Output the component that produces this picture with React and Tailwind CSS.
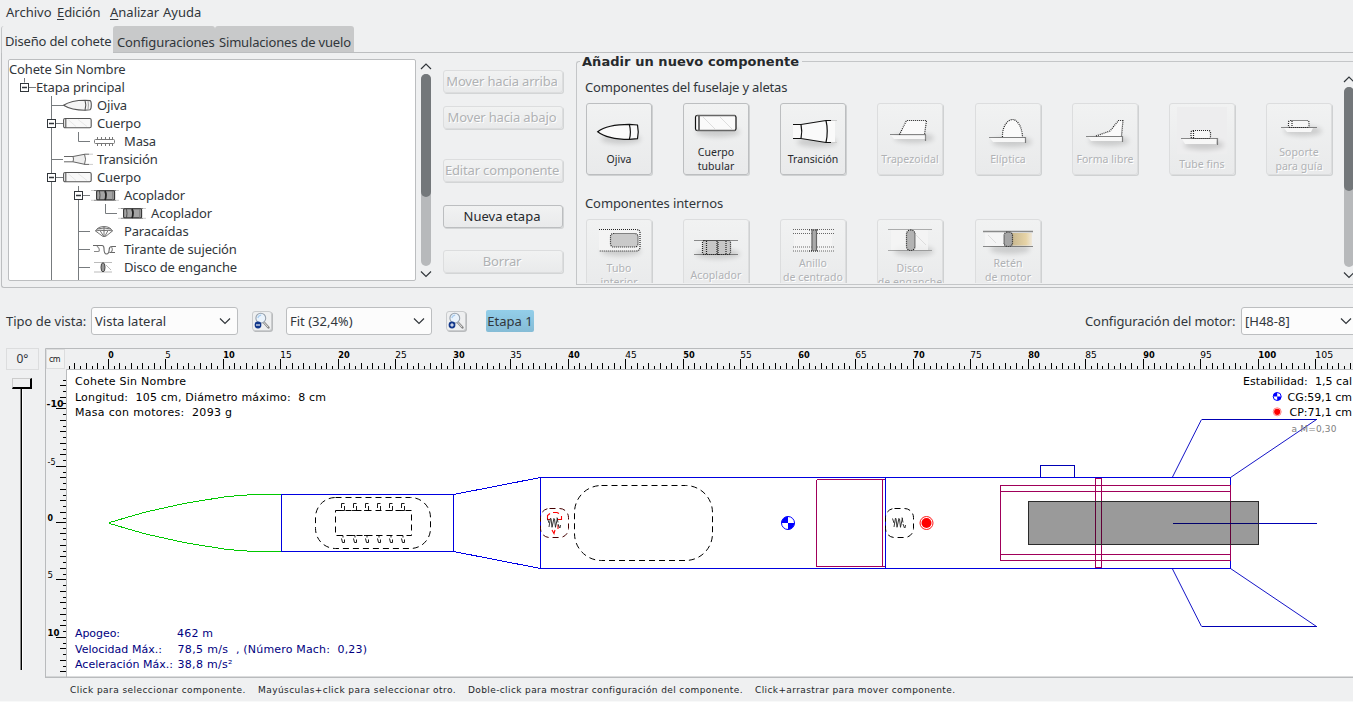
import React from "react";

/* ---------- small shared pieces ---------- */

function Chevron({ up, className = "" }) {
  return (
    <svg width="12" height="8" viewBox="0 0 12 8" className={"shrink-0 " + className} fill="none" stroke="#31363b" strokeWidth="1.2">
      <path d={up ? "M1 6 L6 1 L11 6" : "M1 1.5 L6 6.5 L11 1.5"} />
    </svg>
  );
}

function PushButton({ children, enabled, className = "" }) {
  return (
    <div
      className={
        "flex h-[23px] w-[120px] shrink-0 items-center justify-center whitespace-nowrap rounded-[3px] border bg-linear-to-b from-[#f1f2f2] to-[#e9eaeb] pr-[2px] pb-[2px] text-[13px] tracking-[-0.16px] shadow-[1px_1px_0_#d3d5d6] " +
        (enabled ? "border-[#bcbec0] text-[#26292c] tracking-normal " : "border-[#dcddde] text-[#b0b2b4] [text-shadow:1px_1px_0_#fff] ") +
        className
      }
    >
      {children}
    </div>
  );
}

/* ---------- design tree ---------- */

function NoseIcon() {
  return (
    <g fill="#f4f4f4" stroke="#555" strokeWidth="1.1">
      <path d="M0.5 9.3 C7 5 13 4.2 22 4.2 L27 4.6 Q28.3 5 28.3 9 T27 13.8 L22 14.3 C13 14.3 7 13.3 0.5 9.3Z" />
      <path d="M22 4.2 Q23.6 9 22 14.3" fill="none" />
      <path d="M25 5 Q26 9 25 13.6" fill="none" stroke="#aaa" />
    </g>
  );
}
function TubeIcon() {
  return (
    <g fill="#f8f8f8" stroke="#555" strokeWidth="1.1">
      <rect x="0.6" y="4.5" width="27.6" height="9.2" rx="1.5" />
      <path d="M2.8 4.5 V13.7" fill="none" />
      <path d="M5 5.5 L13 12.5 M15 5.5 L24 12.5" stroke="#e2e2e2" strokeWidth="0.8" />
    </g>
  );
}
function TransitionIcon() {
  return (
    <g fill="#f0f0f0" stroke="#666" strokeWidth="1">
      <path d="M10 6.5 L21.5 4.2 V14.4 L10 11.8Z" stroke="none" fill="#eee" />
      <path d="M1 6.5 H10 L22 4.2 H26 M1 11.8 H10 L22 14.4 H26" fill="none" />
      <path d="M26 4.2H30M26 14.4H30" stroke="#ccc" />
      <path d="M10 6.5 Q11 9 10 11.8 M21.5 4.2 Q23.5 9 21.5 14.4" fill="none" />
    </g>
  );
}
function MassIcon() {
  return (
    <g stroke="#777" fill="none">
      <rect x="0.5" y="7.5" width="20" height="4" rx="1" fill="#fff" />
      <path d="M3.5 5V7M7.5 5V7M11.5 5V7M15.5 5V7M18.5 5V7M3.5 12V14M7.5 12V14M11.5 12V14M15.5 12V14M18.5 12V14" />
    </g>
  );
}
function CouplerIcon() {
  return (
    <g>
      <path d="M3 4.5 H25 M3 14.3 H25" stroke="#888" strokeWidth="1" />
      <path d="M0 4.5 H3 M25 4.5H28 M0 14.3 H3 M25 14.3H28" stroke="#ccc" strokeWidth="1" />
      <rect x="5.6" y="4.8" width="18" height="9" rx="1" fill="#a4a4a4" stroke="#333" strokeWidth="1.1" />
      <path d="M8.5 5 Q9.5 9 8.5 14" stroke="#444" strokeWidth="0.9" fill="none" />
      <path d="M14 5 Q16 9 14 14" stroke="#222" strokeWidth="1.8" fill="none" />
      <path d="M21.8 5V14" stroke="#777" strokeWidth="0.9" />
    </g>
  );
}
function ChuteIcon() {
  return (
    <g fill="#eee" stroke="#666" strokeWidth="0.9">
      <path d="M0.5 9 Q3 4.5 9 4.5 Q15 4.5 17.5 9 Q13 7.8 9 8.6 Q5 7.8 0.5 9Z" />
      <path d="M0.5 9 L8 14.5 H10.5 L17.5 9 M5 8.5 L8.5 14 M13 8.5 L10 14 M9 5 V14 M2 7 Q9 5 16 7" fill="none" />
    </g>
  );
}
function CordIcon() {
  return (
    <g fill="none" stroke="#666" strokeWidth="1.1">
      <path d="M1 5.5H10Q12 5.5 12 8.5Q12 14 14.5 14Q17 14 17.2 9.5Q17.2 6.5 20 6.5H24M17.5 12.5H23" />
      <path d="M2 11.5H6Q8 11.5 7 8.5L5 6M19 12Q21.5 10 19.5 7" stroke="#888" />
    </g>
  );
}
function DiscIcon() {
  return (
    <g fill="none" stroke="#aaa">
      <path d="M0 4.5 H18 M0 14 H18 M12 7 L17 12" strokeWidth="0.8" />
      <ellipse cx="9" cy="9.3" rx="2" ry="4.6" fill="#999" stroke="#444" />
    </g>
  );
}

const LINE = "#777b7e";
const TREE = [
  { label: "Cohete Sin Nombre", x: 0, lines: "" },
  { label: "Etapa principal", x: 27, lines: "M15.5 0V4.5 M20 9.5H27", box: 15.5 },
  { label: "Ojiva", x: 88, lines: "M42.5 0V18 M42.5 9.5H54", Icon: NoseIcon, ix: 54 },
  { label: "Cuerpo", x: 88, lines: "M42.5 0V18 M47 9.5H54", box: 42.5, Icon: TubeIcon, ix: 54 },
  { label: "Masa", x: 115, lines: "M42.5 0V18 M69.5 0V9.5H81", Icon: MassIcon, ix: 85 },
  { label: "Transición", x: 88, lines: "M42.5 0V18 M42.5 9.5H54", Icon: TransitionIcon, ix: 54 },
  { label: "Cuerpo", x: 88, lines: "M42.5 0V18 M47 9.5H54", box: 42.5, Icon: TubeIcon, ix: 54 },
  { label: "Acoplador", x: 115, lines: "M42.5 0V18 M69.5 0V18 M74 9.5H81", box: 69.5, Icon: CouplerIcon, ix: 82 },
  { label: "Acoplador", x: 142, lines: "M42.5 0V18 M69.5 0V18 M96.5 0V9.5H108", Icon: CouplerIcon, ix: 109 },
  { label: "Paracaídas", x: 115, lines: "M42.5 0V18 M69.5 0V18 M69.5 9.5H81", Icon: ChuteIcon, ix: 86 },
  { label: "Tirante de sujeción", x: 115, lines: "M42.5 0V18 M69.5 0V18 M69.5 9.5H81", Icon: CordIcon, ix: 83 },
  { label: "Disco de enganche", x: 115, lines: "M42.5 0V22 M69.5 0V22 M69.5 9.5H81", Icon: DiscIcon, ix: 85 },
];

function DesignTree() {
  return (
    <div className="flex h-[222px] w-[408px] shrink-0 flex-col overflow-hidden rounded-[2px] border border-[#bcbec0] bg-white">
      {TREE.map(({ label, x, lines, box, Icon, ix }, i) => (
        <div key={i} className="flex h-[18px] shrink-0 items-center">
          <svg width={x} height="18" className="shrink-0 overflow-visible">
            <path d={lines} fill="none" stroke={LINE} />
            {box && (
              <g>
                <rect x={box - 4} y="5.5" width="8" height="8" fill="#fff" stroke="#31363b" />
                <path d={`M${box - 2.5} 9.5h5`} stroke="#31363b" strokeWidth="1.4" />
              </g>
            )}
            {Icon && (
              <g transform={`translate(${ix} 0)`}>
                <Icon />
              </g>
            )}
          </svg>
          <span className="whitespace-nowrap text-[13px] leading-[18px] tracking-[-0.15px]">{label}</span>
        </div>
      ))}
    </div>
  );
}

/* ---------- component palette ---------- */

const INK = "#111";
const DOT = { fill: "none", stroke: "#222", strokeWidth: 1.2, strokeDasharray: "1 1" };

const Shadow = ({ x, y, w }) => (
  <ellipse cx={x} cy={y} rx={w} ry="5" fill="#000" opacity="0.14" filter="url(#soft)" />
);

const ICONS = {
  ojiva: (
    <g>
      <Shadow x={34} y={35} w={20} />
      <path d="M10.7 27.7 C18 22 30 20.3 42.3 20.3 L50.5 21 Q52 28 50.5 34.7 L42.3 35.4 C30 35.3 18 33.5 10.7 27.7Z" fill="#fafafa" stroke={INK} strokeWidth="1.2" />
      <path d="M42.3 20.3 Q44.5 28 42.3 35.4" fill="none" stroke={INK} strokeWidth="1.2" />
    </g>
  ),
  cuerpo: (
    <g>
      <Shadow x={34} y={28} w={22} />
      <rect x="11.5" y="11.5" width="40.5" height="15" rx="1.8" fill="#fafafa" stroke={INK} strokeWidth="1.2" />
      <path d="M15 12 V26.5" stroke={INK} strokeWidth="1.2" />
      <path d="M19 13 L31 25 M36 13 L48 25" stroke="#ddd" />
      <path d="M13 11.5H51M13 26.5H51" stroke="#666" strokeWidth="1.6" />
    </g>
  ),
  transicion: (
    <g>
      <Shadow x={36} y={38} w={20} />
      <path d="M12 20.5 H20 L45 16.5 H54 V38.5 H45 L20 34.5 H12Z" fill="#fafafa" />
      <path d="M12 20.5 H20 L45 16.5 H50 M12 34.5 H20 L45 38.5 H50 M20 20.5 Q21.5 27.5 20 34.5 M45 16.5 Q47.5 27 45 38.5" fill="none" stroke={INK} strokeWidth="1.2" />
      <path d="M50 16.5H56M50 38.5H56" stroke="#ccc" />
    </g>
  ),
  trapezoidal: (
    <g>
      <Shadow x={36} y={34} w={20} />
      <path d="M21.5 30.5 L27.7 16.5 H48.5 L46.5 30.5Z" fill="#fafafa" />
      <path d="M13 31.5H48V35H16Z" fill="#f7f7f7" />
      <path d="M12.5 30.5H47.5V37 M21.5 30.5 L28.5 16.5 H48.5 L46.5 30.5" {...DOT} />
    </g>
  ),
  eliptica: (
    <g>
      <Shadow x={36} y={38} w={20} />
      <path d="M26.5 33 C26 22 32 15.5 36.5 15.5 C41 15.5 46 22 46.5 33Z" fill="#fafafa" />
      <path d="M14 34H49V38H17Z" fill="#f7f7f7" />
      <path d="M13.5 33.5H49.5V39 M26.5 33 C26 22 32 15.5 36.5 15.5 C41 15.5 46 22 46.5 33" {...DOT} />
    </g>
  ),
  libre: (
    <g>
      <Shadow x={36} y={37} w={20} />
      <path d="M23 32 L37 27 L45.5 16.5 H50 L48.5 32Z" fill="#fafafa" />
      <path d="M15 33H49V37H18Z" fill="#f7f7f7" />
      <path d="M13.5 32.5H49.5V38 M23 32 L37 27 L45.5 16.5 H50 L48.5 32" {...DOT} />
    </g>
  ),
  tubefins: (
    <g>
      <rect x="7" y="3" width="50" height="47" fill="#ededee" />
      <Shadow x={34} y={41} w={20} />
      <path d="M12 35H46V40H15Z" fill="#f7f7f7" />
      <rect x="21" y="26.5" width="19.5" height="8" rx="2" {...DOT} fill="#f7f7f7" />
      <path d="M11.5 34.5H47.5V41 M23.5 27V34" {...DOT} />
    </g>
  ),
  soporte: (
    <g>
      <Shadow x={36} y={27} w={19} />
      <path d="M17 24H46L44 28H20Z" fill="#f7f7f7" />
      <rect x="21.5" y="16.5" width="20.5" height="7" rx="2" {...DOT} fill="#f7f7f7" />
      <path d="M14.5 23.5H49.5 M25 17V23" {...DOT} />
    </g>
  ),
  tubo: (
    <g>
      <Shadow x={34} y={31} w={20} />
      <path d="M12 9.5H49Q53 9.5 53 13V27Q53 31 49 31H12Z" fill="#f4f4f4" />
      <path d="M12 9.5H49Q53 9.5 53 13V27Q53 31 49 31H12" {...DOT} />
      <rect x="23.5" y="13.5" width="27.5" height="13.5" rx="3" fill="#c9c9c9" />
      <rect x="23.5" y="13.5" width="27.5" height="13.5" rx="3" {...DOT} />
    </g>
  ),
  acoplador: (
    <g>
      <Shadow x={34} y={34} w={22} />
      <rect x="18.5" y="20.5" width="28" height="14" rx="2" fill="#c6c6c6" />
      <rect x="18.5" y="20.5" width="28" height="14" rx="2" {...DOT} />
      <path d="M10.5 20.5H54M10.5 34.5H54M22.5 21V34M33 21V34M34 22V35M42 21V34" {...DOT} />
    </g>
  ),
  anillo: (
    <g>
      <rect x="13" y="9" width="38" height="22" fill="#f5f5f5" opacity="0.8" />
      <path d="M12 9.5H54M12 13.5H54M12 27H54M12 31H54" {...DOT} stroke="#666" />
      <rect x="30.5" y="9" width="5.5" height="22" rx="2" fill="#aaa" />
      <path d="M31 9.5V31M35.5 9.5V31M28 10H38M28 31H38" {...DOT} />
    </g>
  ),
  disco: (
    <g>
      <Shadow x={36} y={31} w={20} />
      <rect x="13" y="10" width="37" height="20" fill="#f5f5f5" opacity="0.8" />
      <path d="M10.5 9.5H53.5M10.5 30.5H53.5" {...DOT} stroke="#666" />
      <path d="M38 15L48 25" stroke="#ddd" />
      <rect x="28.5" y="10" width="8.5" height="20.5" rx="4" fill="#b3b3b3" />
      <rect x="28.5" y="10" width="8.5" height="20.5" rx="4" {...DOT} />
    </g>
  ),
  reten: (
    <g>
      <Shadow x={34} y={29} w={20} />
      <rect x="9" y="12" width="20" height="14" fill="#f5f5f5" />
      <rect x="36" y="13" width="20" height="12.5" fill="url(#amber)" />
      <path d="M7.5 11.5H56.5" {...DOT} strokeWidth="1.6" />
      <path d="M7.5 26.5H56.5" {...DOT} />
      <path d="M12 15L20 23" stroke="#ddd" />
      <rect x="28" y="12" width="8.5" height="14.5" rx="3.5" fill="#a5a5a5" />
      <rect x="28" y="12" width="8.5" height="14.5" rx="3.5" {...DOT} />
    </g>
  ),
};

function ComponentCard({ icon, iconHeight, lines, enabled }) {
  return (
    <div
      className={
        "flex h-[72px] w-[66px] flex-col items-center rounded-[3px] border bg-linear-to-b from-[#f1f2f2] to-[#e9eaeb] shadow-[1px_1px_0_#cfd1d2] " +
        (enabled ? "border-[#bcbec0] text-[#26292c]" : "border-[#dcddde] text-[#b0b2b5] [text-shadow:1px_1px_0_#fff]")
      }
    >
      <svg width="64" height={iconHeight} className="-mb-px shrink-0 overflow-visible">
        {ICONS[icon]}
      </svg>
      {lines.map((l) => (
        <span key={l} className="whitespace-nowrap text-[10.5px] leading-[14px] tracking-[0.06px]">
          {l}
        </span>
      ))}
    </div>
  );
}

const BODY = [
  { icon: "ojiva", iconHeight: 49, lines: ["Ojiva"], enabled: true },
  { icon: "cuerpo", iconHeight: 42, lines: ["Cuerpo", "tubular"], enabled: true },
  { icon: "transicion", iconHeight: 49, lines: ["Transición"], enabled: true },
  { icon: "trapezoidal", iconHeight: 49, lines: ["Trapezoidal"] },
  { icon: "eliptica", iconHeight: 49, lines: ["Elíptica"] },
  { icon: "libre", iconHeight: 49, lines: ["Forma libre"] },
  { icon: "tubefins", iconHeight: 54, lines: ["Tube fins"] },
  { icon: "soporte", iconHeight: 42, lines: ["Soporte", "para guía"] },
];
const INNER = [
  { icon: "tubo", iconHeight: 42, lines: ["Tubo", "interior"] },
  { icon: "acoplador", iconHeight: 49, lines: ["Acoplador"] },
  { icon: "anillo", iconHeight: 37, lines: ["Anillo", "de centrado"] },
  { icon: "disco", iconHeight: 42, lines: ["Disco", "de enganche"] },
  { icon: "reten", iconHeight: 37, lines: ["Retén", "de motor"] },
];

function CardRow({ items }) {
  return (
    <div className="grid grid-cols-[97px_97px_97px_98px_97px_97px_97px_97px]">
      {items.map((c) => (
        <ComponentCard key={c.icon} {...c} />
      ))}
    </div>
  );
}

function ScrollBar({ thumb, track, className = "" }) {
  return (
    <div className={"flex w-[12px] shrink-0 flex-col items-center " + className}>
      <Chevron up />
      <div className={"mt-[3px] w-[10px] rounded-full bg-[#b7b9bb] " + track}>
        <div className={"w-full rounded-full bg-[#73777a] " + thumb} />
      </div>
      <Chevron className="mt-[4px]" />
    </div>
  );
}

function Palette() {
  return (
    <div className="mt-[8px] ml-[13px] flex h-[224px] w-[777px] shrink-0 flex-col rounded-tl-[3px] border-t border-b border-l border-[#c4c6c8]">
      <div className="-mt-[8px] ml-[3px] h-[16px] w-[222px] bg-[#eff0f1] pl-[2px] font-['DejaVu_Sans'] text-[13px] font-bold leading-[16px] tracking-[0.05px] whitespace-nowrap text-[#26292c]">
        Añadir un nuevo componente
      </div>
      <div className="flex">
        <div className="flex h-[213px] w-[767px] shrink-0 flex-col overflow-hidden pl-[9px]">
          <div className="mt-[8px] -ml-px h-[18px] text-[13px] leading-[18px] tracking-[-0.18px]">Componentes del fuselaje y aletas</div>
          <div className="mt-[7px]">
            <CardRow items={BODY} />
          </div>
          <div className="mt-[19px] -ml-px h-[18px] text-[13px] leading-[18px] tracking-[-0.1px]">Componentes internos</div>
          <div className="mt-[7px]">
            <CardRow items={INNER} />
          </div>
        </div>
        <ScrollBar className="mt-[6px] -ml-px" track="h-[180px]" thumb="h-[104px]" />
      </div>
    </div>
  );
}

/* ---------- view toolbar ---------- */

function Combo({ children, className = "" }) {
  return (
    <div className={"flex h-[28px] shrink-0 items-center justify-between rounded-[3px] border border-[#bcbec0] bg-[#fcfcfc] pr-[6px] pl-[3px] " + className}>
      <span className="whitespace-nowrap">{children}</span>
      <Chevron />
    </div>
  );
}

function ZoomButton({ plus, className = "" }) {
  return (
    <div className={"flex size-[20px] shrink-0 items-center justify-center rounded-[3px] border border-[#c9cbcd] bg-[#eeeff0] shadow-[1px_1px_0_#b9bbbd] " + className}>
      <svg width="18" height="18" viewBox="0 0 18 18" className="shrink-0">
        <path d="M10.5 10 L15.5 15.5" stroke="#888" strokeWidth="2.4" strokeLinecap="round" />
        <path d="M10.5 10 L15 15" stroke="#ddd" strokeWidth="1" />
        <circle cx="7.8" cy="6.2" r="4.9" fill="#eaf3fc" stroke="#97a1ad" strokeWidth="1.1" />
        <path d="M4.8 6 Q5.5 3.4 8.2 3.2" stroke="#a9cdf0" strokeWidth="1.2" fill="none" />
        <circle cx="5" cy="13" r="3.4" fill="#12388c" />
        <path d={plus ? "M3.2 13H6.8M5 11.2V14.8" : "M3 13H7"} stroke="#fff" strokeWidth="1.1" />
      </svg>
    </div>
  );
}

/* ---------- rulers and rocket drawing (page pixels, origin 45,348) ---------- */

const CM = 11.497;
const tickX = (v) => (v < 0 ? Math.ceil(108.4 + v * CM) : Math.floor(108.4 + v * CM));
const tickY = (v) => (v < 0 ? Math.ceil(522.9 + v * CM) : Math.floor(522.3 + v * CM));

function HorizontalRuler() {
  const out = [];
  for (let k = -7; k <= 216; k++) {
    const v = k / 2;
    const h = v % 5 === 0 && v >= 0 ? 10 : k % 2 === 0 ? 6 : 3;
    out.push(<rect key={k} x={tickX(v)} y={369 - h} width="1" height={h} fill="#000" />);
    if (v >= 0 && v % 5 === 0)
      out.push(
        <text key={"t" + k} x={tickX(v) + 0.2} y="358" fontSize="9.5" textLength={v > 99 ? 18 : v > 9 ? 11.5 : 5.5} lengthAdjust="spacingAndGlyphs" fontWeight={v % 10 === 0 ? 700 : 400}>
          {v}
        </text>
      );
  }
  return <g fontFamily="DejaVu Sans">{out}</g>;
}

function VerticalRuler() {
  const out = [];
  for (let k = -25; k <= 26; k++) {
    const v = k / 2;
    const y = tickY(v);
    const w = v % 5 === 0 ? 10 : k % 2 === 0 ? 6 : 3;
    out.push(<rect key={k} x={66 - w} y={y} width={w} height="1" fill="#000" />);
    if (v % 5 === 0)
      out.push(
        <text key={"t" + k} x={v === -10 ? 46.5 : 47.5} y={v === -10 ? 407 : y - 1} fontSize="9.5" textLength={v === -10 ? 17 : v === 10 ? 12 : v < 0 ? 8 : 5.5} lengthAdjust="spacingAndGlyphs" fontWeight={v % 10 === 0 ? 700 : 400}>
          {v}
        </text>
      );
  }
  return <g fontFamily="DejaVu Sans">{out}</g>;
}

function Label({ x, y, w, children, fill = "#000", size = 11 }) {
  return (
    <text x={x} y={y} textLength={w} fontSize={size} fill={fill} className="whitespace-pre">
      {children}
    </text>
  );
}

function Spring({ x }) {
  return (
    <path
      d={`M${x - 6.5} 518.5l1.5 4.5M${x - 3.5} 518l-1.5 9M${x - 3} 518.5l1 8.5M${x} 518l-2 9.5M${x + 0.5} 519l1 8.5M${x + 3.5} 518l-2 9M${x + 3} 517.5l1 5M${x + 4} 524l1.5 4M${x + 6.5} 525l-0.5 3`}
      fill="none"
      stroke="#222"
      strokeWidth="0.9"
    />
  );
}

function Balance({ x, y, r }) {
  return (
    <g>
      <circle cx={x} cy={y} r={r} fill="#fff" stroke="#00f" strokeWidth="1" />
      <path d={`M${x} ${y}V${y - r}A${r} ${r} 0 0 0 ${x - r} ${y}ZM${x} ${y}V${y + r}A${r} ${r} 0 0 0 ${x + r} ${y}Z`} fill="#00f" />
    </g>
  );
}

function RocketView() {
  const pins = [0, 1, 2, 3, 4, 5];
  return (
    <svg width="1308" height="330" viewBox="45 348 1308 330" className="shrink-0">
      <rect x="45" y="348" width="1308" height="330" fill="#eff0f1" />
      <rect x="67" y="370" width="1286" height="307" fill="#fff" />
      <path d="M45.5 678V348.5H1353M66.5 369.5H1353M66.5 369.5V677" stroke="#b9bbbd" fill="none" />
      <path d="M45 677.2H1353" stroke="#b9bbbd" strokeWidth="1.4" />
      <rect x="46.5" y="349.5" width="18" height="19" fill="#f2f3f3" stroke="#dcddde" />
      <text x="49" y="362" fontSize="8" fontFamily="DejaVu Sans" textLength="11.5" fill="#222">cm</text>
      <HorizontalRuler />
      <VerticalRuler />

      <g fill="none" strokeWidth="1" shapeRendering="crispEdges">
        <path d="M281.5 494.5H254L227 496.5L185 503.3L144.5 512.3L109.5 522.5M281.5 551.5H254L227 549.5L185 542.7L144.5 533.7L109.5 523.5" stroke="#00c800" />
        <path d="M281.5 494.5H453.5V551.5H281.5Z" stroke="#0000e0" />
        <path d="M453.5 494.5L540.5 477.5V568.5L453.5 551.5" stroke="#0000e6" />
        <path d="M816.5 479.5H885.5M816.5 566.5H885.5M816.5 479.5V566.5M882.5 479.5V566.5" stroke="#a0005a" />
        <path d="M540.5 477.5H885.5V568.5H540.5Z" stroke="#0000e0" />
        <path d="M885.5 477.5H1230.5V568.5H885.5Z" stroke="#0000e0" />
        <path d="M1000.5 485.5H1230.5V560.5H1000.5ZM1000.5 491.5H1230.5M1000.5 554.5H1230.5M1095.5 478.5H1101.5V567.5H1095.5Z" stroke="#a0005a" />
        <path d="M1040.5 477V465.5H1074.5V477" stroke="#0000b4" />
        <path d="M1201.5 419.5H1316.5M1201.5 626.5H1316.5M1172.5 523.5H1316.5" stroke="#0000b4" />
      </g>
      <path d="M1172.5 477L1201.5 419.5M1316.5 419.5L1230.5 477.5M1172.5 569L1201.5 626.5M1316.5 626.5L1230.5 568.5" stroke="#1414c8" fill="none" />
      <rect x="1028.5" y="501.5" width="230" height="43" fill="#000" fillOpacity="0.395" stroke="#2b2b2b" />

      <g fill="none" stroke="#000" strokeDasharray="6 4">
        <rect x="315.5" y="497.5" width="115" height="51" rx="20" />
        <rect x="335.5" y="510.5" width="76" height="25" />
        <rect x="574.5" y="485.5" width="138" height="75" rx="27" />
        <rect x="885.5" y="508.5" width="28" height="29" rx="9" />
      </g>
      <rect x="540.5" y="508.5" width="28" height="29" rx="9" fill="none" stroke="#400" strokeDasharray="6 4" />
      {pins.map((i) => (
        <path key={i} d={`M${340 + i * 12} 510.5h3M${341.5 + i * 12} 508v-4.5h3M${344.5 + i * 12} 506v4.5h-2M${340 + i * 12} 535.5h3v2M${341.5 + i * 12} 538.5l1 4h2v-3`} fill="none" stroke="#000" strokeWidth="0.9" />
      ))}
      <path d="M547.5 519V515.5L550 513.5M553 512.5H557L559 513.5M561.5 516V520M547 519.5H550M557 519.5H562M552 530L554 533.5L555 530M558 525V529" stroke="#f00" strokeWidth="1.1" fill="none" />
      <Spring x={554} />
      <Spring x={899} />

      <Balance x={788} y={523} r={6.5} />
      <circle cx="926.5" cy="523" r="6.5" fill="#fff" stroke="#f00" strokeWidth="0.9" />
      <circle cx="926.5" cy="523" r="5" fill="#f00" />

      <g fontFamily="DejaVu Sans">
        <Label x={75} y={385} w={111}>Cohete Sin Nombre</Label>
        <Label x={75} y={401} w={251}>{"Longitud:  105 cm, Diámetro máximo:  8 cm"}</Label>
        <Label x={75} y={416} w={157}>{"Masa con motores:  2093 g"}</Label>

        <Label x={1243} y={385} w={109}>{"Estabilidad:  1,5 cal"}</Label>
        <Balance x={1277.2} y={396.5} r={4} />
        <Label x={1287.5} y={401} w={64.5}>CG:59,1 cm</Label>
        <circle cx="1277.2" cy="411.8" r="4" fill="#fff" stroke="#f66" strokeWidth="0.8" />
        <circle cx="1277.2" cy="411.8" r="3.1" fill="#f00" />
        <Label x={1289.5} y={416} w={62.5}>CP:71,1 cm</Label>
        <Label x={1291.5} y={432} w={45} size={9} fill="#808080">a M=0,30</Label>

        <g>
          <Label x={75} y={637} w={45} fill="#000080">Apogeo:</Label>
          <Label x={177} y={637} w={36} fill="#000080">462 m</Label>
          <Label x={75} y={653} w={87} fill="#000080">Velocidad Máx.:</Label>
          <Label x={177.5} y={653} w={50.5} fill="#000080">78,5 m/s</Label>
          <Label x={236} y={653} w={131} fill="#000080">{", (Número Mach:  0,23)"}</Label>
          <Label x={75} y={668} w={98} fill="#000080">Aceleración Máx.:</Label>
          <Label x={177.5} y={668} w={55} fill="#000080">38,8 m/s²</Label>
        </g>
      </g>
    </svg>
  );
}

function RotationSlider() {
  return (
    <div className="flex w-[45px] shrink-0 flex-col pl-[6px]">
      <div className="flex h-[22px] w-[33px] items-center justify-center border border-[#dcddde] text-[12px] text-[#31363b]">0°</div>
      <div className="mt-[8px] ml-[6px] flex w-[20px] flex-col items-center">
        <div className="h-[11px] w-[20px] border-t border-r-2 border-b-2 border-l border-t-[#ccc] border-r-black border-b-black border-l-[#ccc] bg-[#eff0f1]" />
        <div className="-ml-px h-[281px] w-[3px] border-r border-l border-r-white border-l-[#8a8a8a] bg-black" />
      </div>
    </div>
  );
}

/* ---------- page ---------- */

export default function App() {
  return (
    <div className="flex h-[702px] w-[1353px] flex-col overflow-hidden bg-[#eff0f1] font-['Noto_Sans',sans-serif] text-[13px] leading-[18px] text-[#31363b]">
      <svg width="0" height="0" className="absolute">
        <defs>
          <filter id="soft" x="-30%" y="-100%" width="160%" height="300%">
            <feGaussianBlur stdDeviation="2.5" />
          </filter>
          <linearGradient id="amber" x1="0" x2="1" y1="0" y2="0">
            <stop offset="0" stopColor="#c9b88f" />
            <stop offset="0.7" stopColor="#e6d3a6" />
            <stop offset="1" stopColor="#efe8da" />
          </linearGradient>
        </defs>
      </svg>

      <div className="flex h-[26px] shrink-0 items-center pb-[2px] pl-[6px]">
        <span className="w-[51px]">Archivo</span>
        <span className="w-[53px] tracking-[-0.1px]"><u className="underline-offset-2">E</u>dición</span>
        <span className="w-[53px]"><u className="underline-offset-2">A</u>nalizar</span>
        <span>Ayuda</span>
      </div>

      <div className="flex h-[26px] shrink-0 items-stretch whitespace-nowrap pl-px">
        <div className="z-10 -mb-px w-[112px] rounded-t-[3px] border-l border-[#c4c6c8] bg-[#eff0f1] pt-[6px] pl-[3px] tracking-[-0.17px]">Diseño del cohete</div>
        <div className="w-[102px] rounded-t-[3px] bg-[#c8c9ca] pt-[7px] pl-[4px] tracking-[-0.12px]">Configuraciones</div>
        <div className="w-[139px] rounded-t-[3px] bg-[#c8c9ca] pt-[7px] pl-[4px] tracking-[-0.18px]">Simulaciones de vuelo</div>
      </div>

      <div className="ml-px flex h-[236px] w-[1352px] shrink-0 rounded-bl-[3px] border-t border-b border-l border-[#bcbec0] pl-[6px]">
        <div className="pt-[6px]">
          <DesignTree />
        </div>
        <ScrollBar className="mt-[10px] ml-[4px]" track="h-[192px]" thumb="h-[123px]" />
        <div className="ml-[11px] flex flex-col pt-[17px]">
          <PushButton>Mover hacia arriba</PushButton>
          <PushButton className="mt-[13px]">Mover hacia abajo</PushButton>
          <PushButton className="mt-[30px]">Editar componente</PushButton>
          <PushButton className="mt-[23px]" enabled>Nueva etapa</PushButton>
          <PushButton className="mt-[22px]">Borrar</PushButton>
        </div>
        <Palette />
      </div>

      <div className="flex h-[60px] shrink-0 items-center whitespace-nowrap pt-[6px] pl-[6px]">
        <span className="w-[85px] shrink-0">Tipo de vista:</span>
        <Combo className="w-[147px]">Vista lateral</Combo>
        <ZoomButton className="ml-[14px]" />
        <Combo className="ml-[14px] w-[146px]">Fit (32,4%)</Combo>
        <ZoomButton plus className="ml-[14px]" />
        <div className="ml-[20px] flex h-[22px] w-[48px] shrink-0 items-center justify-center rounded-[2px] bg-linear-to-b from-[#93cee9] to-[#85bcd6]">Etapa 1</div>
        <span className="ml-[551px] w-[156px] shrink-0 tracking-[-0.1px]">Configuración del motor:</span>
        <Combo className="w-[118px]">[H48-8]</Combo>
      </div>

      <div className="flex h-[330px] shrink-0">
        <RotationSlider />
        <RocketView />
      </div>

      <div className="flex h-[24px] shrink-0 items-center border-b border-[#f8f9f9] pl-[70px] font-['DejaVu_Sans'] text-[9px] whitespace-nowrap text-[#232629]">
        <span className="w-[188px] tracking-[0.44px]">Click para seleccionar componente.</span>
        <span className="w-[210px] tracking-[0.44px]">Mayúsculas+click para seleccionar otro.</span>
        <span className="w-[287px] tracking-[0.39px]">Doble-click para mostrar configuración del componente.</span>
        <span className="tracking-[0.39px]">Click+arrastrar para mover componente.</span>
      </div>
    </div>
  );
}
